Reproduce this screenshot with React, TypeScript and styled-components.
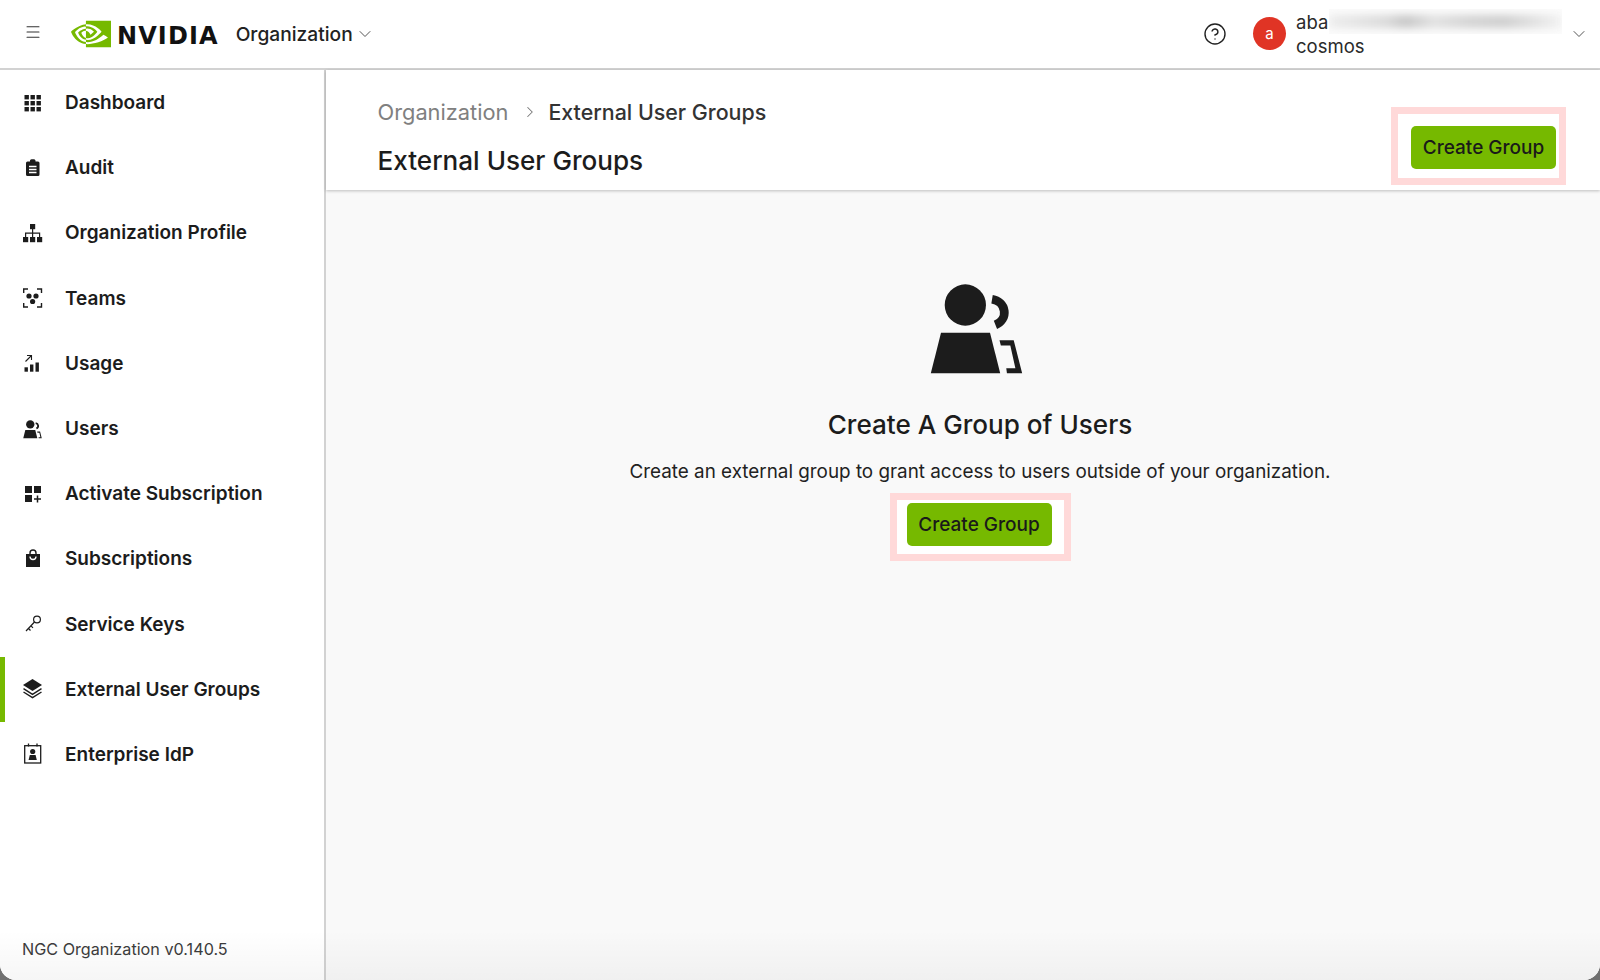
import React from "react";
import styled, { createGlobalStyle } from "styled-components";
import { ChevronDown, ChevronRight, CircleHelp, Menu } from "lucide-react";
import { SiNvidia } from "react-icons/si";

const Global = createGlobalStyle`
  html, body { margin: 0; padding: 0; background: #6f6f6f; }
  body { font-family: Inter, "Noto Sans", "Liberation Sans", sans-serif; color: #1a1a1a; }
  * { box-sizing: border-box; }
`;

const Window = styled.div`
  position: relative;
  width: 1600px;
  height: 980px;
  display: flex;
  flex-direction: column;
  background: #fff;
  border-radius: 0 0 16px 16px;
  overflow: hidden;
  &::after {
    content: "";
    position: absolute;
    left: 0;
    right: 0;
    bottom: 0;
    height: 50px;
    pointer-events: none;
    background: linear-gradient(to bottom, rgba(0, 0, 0, 0), rgba(0, 0, 0, 0.035));
  }
`;

const TopBar = styled.header`
  height: 70px;
  flex: none;
  display: flex;
  align-items: center;
  padding: 0 11px 1px 24px;
  background: #fff;
  border-bottom: 2px solid #d2d2d2;
`;

const MenuButton = styled.div`
  width: 18px;
  height: 18px;
  margin-top: -4px;
  color: #333;
  display: flex;
`;

const Logo = styled.div`
  margin-left: 29px;
  display: flex;
  align-items: center;
  color: #76b900;
`;

const WordMark = styled.span`
  margin: 4px 0 0 6px;
  font-family: "DejaVu Sans", sans-serif;
  font-weight: 700;
  font-size: 24px;
  line-height: 1;
  letter-spacing: 1.1px;
  color: #111;
`;

const OrgSwitch = styled.div`
  margin-left: 17px;
  display: flex;
  align-items: center;
  gap: 2px;
  font-size: 19.2px;
  font-weight: 500;
  color: #222;
  svg { color: #555; }
`;

const Spacer = styled.div`
  flex: 1;
`;

const HelpButton = styled.div`
  display: flex;
  margin-right: 26px;
  color: #222;
`;

const Avatar = styled.div`
  width: 33px;
  height: 33px;
  border-radius: 50%;
  background: #e03425;
  color: #fff;
  font-size: 15px;
  display: flex;
  align-items: center;
  justify-content: center;
`;

const Account = styled.div`
  margin-left: 10px;
  width: 273px;
  font-size: 18.5px;
  line-height: 24px;
  color: #2a2a2a;
`;

const AccountLine = styled.div`
  display: flex;
  align-items: center;
  height: 24px;
`;

const Redaction = styled.div`
  width: 233px;
  height: 25px;
  margin-left: 1px;
  background: #fcfcfc;
  display: flex;
  align-items: center;
  overflow: hidden;
`;

const RedactionBlur = styled.div`
  width: 100%;
  height: 13px;
  filter: blur(4px);
  background: linear-gradient(90deg, #ececec 0%, #d8d8d8 25%, #c4c4c4 33%, #e0e0e0 45%, #d2d2d2 60%, #cccccc 75%, #e2e2e2 90%, #f2f2f2 100%);
`;

const AccountChevron = styled.div`
  display: flex;
  color: #555;
`;

const Body = styled.div`
  flex: 1;
  min-height: 0;
  display: flex;
`;

const Sidebar = styled.nav`
  width: 326px;
  flex: none;
  display: flex;
  flex-direction: column;
  background: #fff;
  border-right: 2px solid #d2d2d2;
`;

const NavItem = styled.div<{ $active?: boolean }>`
  height: 65.2px;
  flex: none;
  display: flex;
  align-items: center;
  gap: 20px;
  padding-left: 21px;
  font-size: 19px;
  font-weight: 600;
  color: #1c1c1c;
  box-shadow: ${(p) => (p.$active ? "inset 5px 0 0 #76b900" : "none")};
`;

const NavIcon = styled.svg`
  width: 24px;
  height: 24px;
  flex: none;
  color: #1c1c1c;
`;

const Version = styled.div`
  margin-top: auto;
  padding: 0 0 21px 22px;
  font-size: 16.2px;
  line-height: 20px;
  color: #3c3c3c;
`;

const Main = styled.main`
  flex: 1;
  min-width: 0;
  display: flex;
  flex-direction: column;
  background: #f9f9f9;
`;

const PageHeader = styled.div`
  height: 120px;
  flex: none;
  display: flex;
  justify-content: space-between;
  padding: 27px 34px 0 51.5px;
  background: #fff;
  box-shadow: 0 1px 3px rgba(0, 0, 0, 0.24);
`;

const Crumbs = styled.div`
  display: flex;
  align-items: center;
  height: 30px;
  font-size: 21.8px;
`;

const CrumbLink = styled.span`
  color: #808080;
`;

const CrumbSeparator = styled.span`
  display: flex;
  margin: 0 9px 0 13px;
  color: #777;
`;

const CrumbCurrent = styled.span`
  font-size: 21.4px;
  font-weight: 500;
  color: #333;
`;

const PageTitle = styled.h1`
  margin: 19px 0 0;
  font-size: 26.1px;
  line-height: 30px;
  font-weight: 500;
  color: #1c1c1c;
`;

const Highlight = styled.div<{ $pad: string }>`
  display: inline-flex;
  flex: none;
  align-self: flex-start;
  border: 7px solid #ffd9d9;
  background: #fff;
  padding: ${(p) => p.$pad};
`;

const TopHighlight = styled(Highlight)`
  margin-top: 10px;
`;

const CreateButton = styled.button`
  width: 145px;
  height: 43px;
  border: none;
  border-radius: 5px;
  background: #76b900;
  color: #1a1a1a;
  font: 500 19px Inter, "Noto Sans", sans-serif;
  padding: 0;
`;

const EmptyState = styled.section`
  flex: 1;
  display: flex;
  flex-direction: column;
  align-items: center;
  padding: 92px 0 0 34px;
`;

const GroupSvg = styled.svg`
  color: #1c1c1c;
  flex: none;
`;

const EmptyIcon = styled(GroupSvg)`
  width: 95px;
  height: 93px;
  margin-right: 8px;
`;

const NavGroupIcon = styled(GroupSvg)`
  width: 24px;
  height: 24px;
`;

const EmptyTitle = styled.h2`
  margin: 33px 0 0;
  font-size: 26.1px;
  line-height: 34px;
  font-weight: 500;
  color: #1c1c1c;
`;

const EmptyText = styled.p`
  margin: 17px 0 0;
  font-size: 18.85px;
  line-height: 26px;
  color: #222;
`;

const EmptyHighlight = styled(Highlight)`
  align-self: center;
  margin-top: 8px;
`;

const GROUP_SHAPES = (
  <>
    <circle cx="257" cy="133" r="61" fill="currentColor" />
    <polygon points="185,215 330,215 360,335 155,335" fill="currentColor" />
    <path d="M336 116 A44 40 0 0 1 346 192" fill="none" stroke="currentColor" strokeWidth="26" />
    <polygon points="358,237 400,237 425,335 380,335 378,320 405,320 390,253 362,253" fill="currentColor" />
  </>
);

const icons: Record<string, React.ReactNode> = {
  Dashboard: (
    <g fill="currentColor">
      {[4, 10, 16].flatMap((y) =>
        [3.5, 9.5, 15.5].map((x) => <rect key={`${x}-${y}`} x={x} y={y} width="4.4" height="4.4" />)
      )}
    </g>
  ),
  Audit: (
    <>
      <path fill="currentColor" d="M9 5.5V4.5a2 2 0 0 1 2-1.2h1.5a2 2 0 0 1 2 1.2v1H17a1.5 1.5 0 0 1 1.5 1.5v11.5A1.5 1.5 0 0 1 17 20H6.5A1.5 1.5 0 0 1 5 18.5V7a1.5 1.5 0 0 1 1.5-1.5z" />
      <path stroke="#fff" strokeWidth="1.4" d="M8 10.5h7.5M8 13.5h7.5M8 16.5h7.5" />
    </>
  ),
  "Organization Profile": (
    <>
      <g fill="currentColor">
        <rect x="9" y="3" width="5.2" height="5.2" />
        <rect x="2" y="16" width="5.2" height="5.2" />
        <rect x="9" y="16" width="5.2" height="5.2" />
        <rect x="16" y="16" width="5.2" height="5.2" />
      </g>
      <path fill="none" stroke="currentColor" strokeWidth="1.2" d="M11.6 8v8M4.6 16v-3.8h14V16" />
    </>
  ),
  Teams: (
    <>
      <path fill="none" stroke="currentColor" strokeWidth="1.4" d="M7 3H2.7v4M16 3h4.5v4M7 21H2.7v-4M16 21h4.5v-4" />
      <g fill="currentColor">
        <circle cx="8" cy="10" r="2.6" />
        <circle cx="15" cy="10" r="2.6" />
        <circle cx="11.6" cy="15.5" r="2.6" />
      </g>
    </>
  ),
  Usage: (
    <>
      <g fill="currentColor">
        <rect x="3.5" y="16.3" width="3.4" height="4.4" />
        <rect x="9" y="13.5" width="3.4" height="7.2" />
        <rect x="14.5" y="11.5" width="3.4" height="9.2" />
      </g>
      <path fill="none" stroke="currentColor" strokeWidth="1.1" d="M4.5 10.5L10 5M6 4.5h4.5V9" />
    </>
  ),
  "Activate Subscription": (
    <>
      <g fill="currentColor">
        <rect x="4" y="4" width="7" height="7" />
        <rect x="13" y="4" width="7" height="7" />
        <rect x="4" y="13" width="7" height="7" />
      </g>
      <path stroke="currentColor" strokeWidth="1.5" d="M16.5 13.5v7M13 17h7" />
    </>
  ),
  Subscriptions: (
    <>
      <path fill="none" stroke="currentColor" strokeWidth="1.4" d="M9 7.5V6a3 3 0 0 1 6 0v1.5" />
      <rect x="5" y="7" width="14" height="13" fill="currentColor" />
      <path fill="none" stroke="#fff" strokeWidth="1.3" d="M9 9.5a3 3 0 0 0 6 0" />
    </>
  ),
  "Service Keys": (
    <g fill="none" stroke="currentColor" strokeWidth="1.2">
      <circle cx="16" cy="7.5" r="3.4" />
      <path d="M13.5 10L5 19M7.5 16.5l2 2M10 13.8l2 2" />
    </g>
  ),
  "External User Groups": (
    <>
      <polygon points="11.5,2 21,8 11.5,14 2,8" fill="currentColor" />
      <path fill="none" stroke="currentColor" strokeWidth="1.4" d="M2.5 11.7l9 5.7 9-5.7M2.5 15l9 5.7 9-5.7" />
    </>
  ),
  "Enterprise IdP": (
    <>
      <rect x="3.7" y="3.7" width="16" height="17.3" fill="none" stroke="currentColor" strokeWidth="1.3" />
      <path stroke="currentColor" strokeWidth="1.3" d="M7.5 1.5v3M16 1.5v3" />
      <circle cx="11.7" cy="9.5" r="2.6" fill="currentColor" />
      <polygon points="8.8,13 14.6,13 15.8,18 7.6,18" fill="currentColor" />
    </>
  ),
};

const NAV = [
  "Dashboard",
  "Audit",
  "Organization Profile",
  "Teams",
  "Usage",
  "Users",
  "Activate Subscription",
  "Subscriptions",
  "Service Keys",
  "External User Groups",
  "Enterprise IdP",
];

export default function App() {
  return (
    <Window>
      <Global />
      <TopBar>
        <MenuButton>
          <Menu size={18} strokeWidth={1.4} />
        </MenuButton>
        <Logo>
          <SiNvidia size={40} />
          <WordMark>NVIDIA</WordMark>
        </Logo>
        <OrgSwitch>
          Organization
          <ChevronDown size={20} strokeWidth={1.2} />
        </OrgSwitch>
        <Spacer />
        <HelpButton>
          <CircleHelp size={24} strokeWidth={1.4} />
        </HelpButton>
        <Avatar>a</Avatar>
        <Account>
          <AccountLine>
            aba
            <Redaction>
              <RedactionBlur />
            </Redaction>
          </AccountLine>
          <AccountLine>cosmos</AccountLine>
        </Account>
        <AccountChevron>
          <ChevronDown size={20} strokeWidth={1.2} />
        </AccountChevron>
      </TopBar>
      <Body>
        <Sidebar>
          {NAV.map((label) => (
            <NavItem key={label} $active={label === "External User Groups"}>
              {label === "Users" ? (
                <NavGroupIcon viewBox="122 25 350 350">{GROUP_SHAPES}</NavGroupIcon>
              ) : (
                <NavIcon viewBox="0 0 24 24">{icons[label]}</NavIcon>
              )}
              {label}
            </NavItem>
          ))}
          <Version>NGC Organization v0.140.5</Version>
        </Sidebar>
        <Main>
          <PageHeader>
            <div>
              <Crumbs>
                <CrumbLink>Organization</CrumbLink>
                <CrumbSeparator>
                  <ChevronRight size={18} strokeWidth={1.4} />
                </CrumbSeparator>
                <CrumbCurrent>External User Groups</CrumbCurrent>
              </Crumbs>
              <PageTitle>External User Groups</PageTitle>
            </div>
            <TopHighlight $pad="12px 3px 9px 13px">
              <CreateButton>Create Group</CreateButton>
            </TopHighlight>
          </PageHeader>
          <EmptyState>
            <EmptyIcon viewBox="150 65 280 275">{GROUP_SHAPES}</EmptyIcon>
            <EmptyTitle>Create A Group of Users</EmptyTitle>
            <EmptyText>Create an external group to grant access to users outside of your organization.</EmptyText>
            <EmptyHighlight $pad="3px 12px 8px 10px">
              <CreateButton>Create Group</CreateButton>
            </EmptyHighlight>
          </EmptyState>
        </Main>
      </Body>
    </Window>
  );
}
